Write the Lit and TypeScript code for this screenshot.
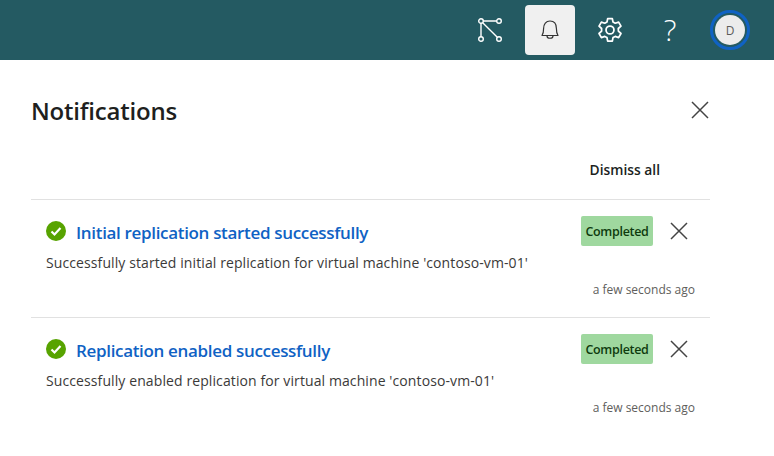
import { LitElement, html, css, svg } from "lit";
import { customElement } from "lit/decorators.js";

const closeIcon = svg`<svg class="x" viewBox="0 0 18 18" width="18" height="18"><path d="M1 1l16 16M17 1L1 17" stroke="#444" stroke-width="1.5" fill="none"/></svg>`;

const items = [
  {
    title: "Initial replication started successfully",
    body: "Successfully started initial replication for virtual machine 'contoso-vm-01'",
  },
  {
    title: "Replication enabled successfully",
    body: "Successfully enabled replication for virtual machine 'contoso-vm-01'",
  },
];

@customElement("app-root")
export class AppRoot extends LitElement {
  static styles = css`
    :host {
      display: block;
      width: 774px;
      height: 456px;
      background: #fff;
      overflow: hidden;
      font-family: "Open Sans", "Noto Sans", sans-serif;
      color: #201f1e;
    }
    .top {
      height: 60px;
      background: #245a62;
      display: flex;
      align-items: center;
      justify-content: flex-end;
      padding-right: 19px;
      box-sizing: border-box;
    }
    .btn {
      width: 50px;
      height: 50px;
      margin-left: 10px;
      display: flex;
      align-items: center;
      justify-content: center;
      border-radius: 4px;
    }
    .btn.on {
      background: #f0f0f0;
    }
    .help {
      font-size: 30px;
      font-weight: 300;
      color: #fff;
      line-height: 1;
    }
    .ring {
      width: 40px;
      height: 40px;
      box-sizing: border-box;
      border: 3px solid #0f62c4;
      border-radius: 50%;
      display: flex;
      align-items: center;
      justify-content: center;
    }
    .avatar {
      width: 30px;
      height: 30px;
      border-radius: 50%;
      background: #ececec;
      color: #5b5b5b;
      font-size: 12px;
      display: flex;
      align-items: center;
      justify-content: center;
    }
    .panel {
      padding: 0 64px 0 31px;
    }
    .head {
      display: flex;
      justify-content: space-between;
      align-items: center;
      height: 100px;
    }
    h1 {
      margin: 0;
      font-size: 24px;
      font-weight: 600;
      letter-spacing: -0.2px;
    }
    .head .x {
      margin-right: 1px;
    }
    .dismiss {
      text-align: right;
      font-size: 13.8px;
      font-weight: 600;
      padding-right: 50px;
      height: 39px;
      line-height: 20px;
    }
    .item {
      border-top: 1px solid #e1e1e1;
      height: 118px;
      padding: 16px 15px 0;
      box-sizing: border-box;
      display: grid;
      grid-template-columns: 1fr auto;
      align-content: start;
    }
    .title {
      display: flex;
      align-items: center;
      gap: 10px;
      color: #0f62c4;
      font-size: 17px;
      font-weight: 600;
      letter-spacing: -0.33px;
      height: 30px;
      padding-top: 2px;
      box-sizing: border-box;
    }
    .title svg {
      margin-top: -3px;
    }
    .right {
      display: flex;
      align-items: center;
      gap: 17px;
      height: 30px;
      padding-right: 7px;
    }
    .badge {
      background: #9fd89f;
      color: #0e3b0e;
      font-size: 12.5px;
      font-weight: 600;
      letter-spacing: -0.3px;
      width: 72px;
      height: 30px;
      border-radius: 2px;
      display: flex;
      align-items: center;
      justify-content: center;
    }
    .body {
      grid-column: 1 / -1;
      font-size: 14px;
      letter-spacing: 0.1px;
      color: #3b3a39;
      margin-top: 7px;
      line-height: 20px;
    }
    .time {
      grid-column: 1 / -1;
      text-align: right;
      font-size: 12px;
      color: #605e5c;
      margin-top: 8px;
      line-height: 18px;
    }
  `;

  render() {
    return html`
      <div class="top">
        <div class="btn">
          <svg width="24" height="24" viewBox="0 0 24 24" fill="none" stroke="#fff" stroke-width="1.4">
            <circle cx="3" cy="3" r="2.3" /><circle cx="21" cy="3" r="2.3" />
            <circle cx="3" cy="21" r="2.3" /><circle cx="21" cy="21" r="2.3" />
            <path d="M5.3 3h13.4M3 5.3v13.4M4.7 4.7l14.6 14.6" />
          </svg>
        </div>
        <div class="btn on">
          <svg width="20" height="22" viewBox="0 0 20 22" fill="none" stroke="#333" stroke-width="1.2">
            <path d="M2 16.5c1.5-2 1.6-4 1.6-7C3.6 5 6 2 10 2s6.4 3 6.4 7.5c0 3 .1 5 1.6 7z" stroke-linejoin="round" />
            <path d="M7 17c0 3 6 3 6 0" />
          </svg>
        </div>
        <div class="btn">
          <svg width="28" height="28" viewBox="0 0 24 24" fill="none" stroke="#fff" stroke-width="1.5" stroke-linejoin="round">
            <circle cx="12" cy="12" r="3.4" />
            <path d="M10 2.2h4l.6 3 1.9 1 2.9-1 2 3.5-2.3 2 .1 2.3 2.2 2-2 3.5-2.9-1-1.9 1-.6 3h-4l-.6-3-1.9-1-2.9 1-2-3.5 2.2-2v-2.3l-2.2-2 2-3.5 2.9 1 1.9-1z" />
          </svg>
        </div>
        <div class="btn"><span class="help">?</span></div>
        <div class="btn"><div class="ring"><div class="avatar">D</div></div></div>
      </div>
      <div class="panel">
        <div class="head">
          <h1>Notifications</h1>
          ${closeIcon}
        </div>
        <div class="dismiss">Dismiss all</div>
        ${items.map(
          (n) => html`
            <div class="item">
              <div class="title">
                <svg width="20" height="20" viewBox="0 0 20 20">
                  <circle cx="10" cy="10" r="10" fill="#57a300" />
                  <path d="M5.5 10.5l3 3 6-6.5" stroke="#fff" stroke-width="2.2" fill="none" />
                </svg>
                ${n.title}
              </div>
              <div class="right">
                <div class="badge">Completed</div>
                ${closeIcon}
              </div>
              <div class="body">${n.body}</div>
              <div class="time">a few seconds ago</div>
            </div>
          `
        )}
      </div>
    `;
  }
}
